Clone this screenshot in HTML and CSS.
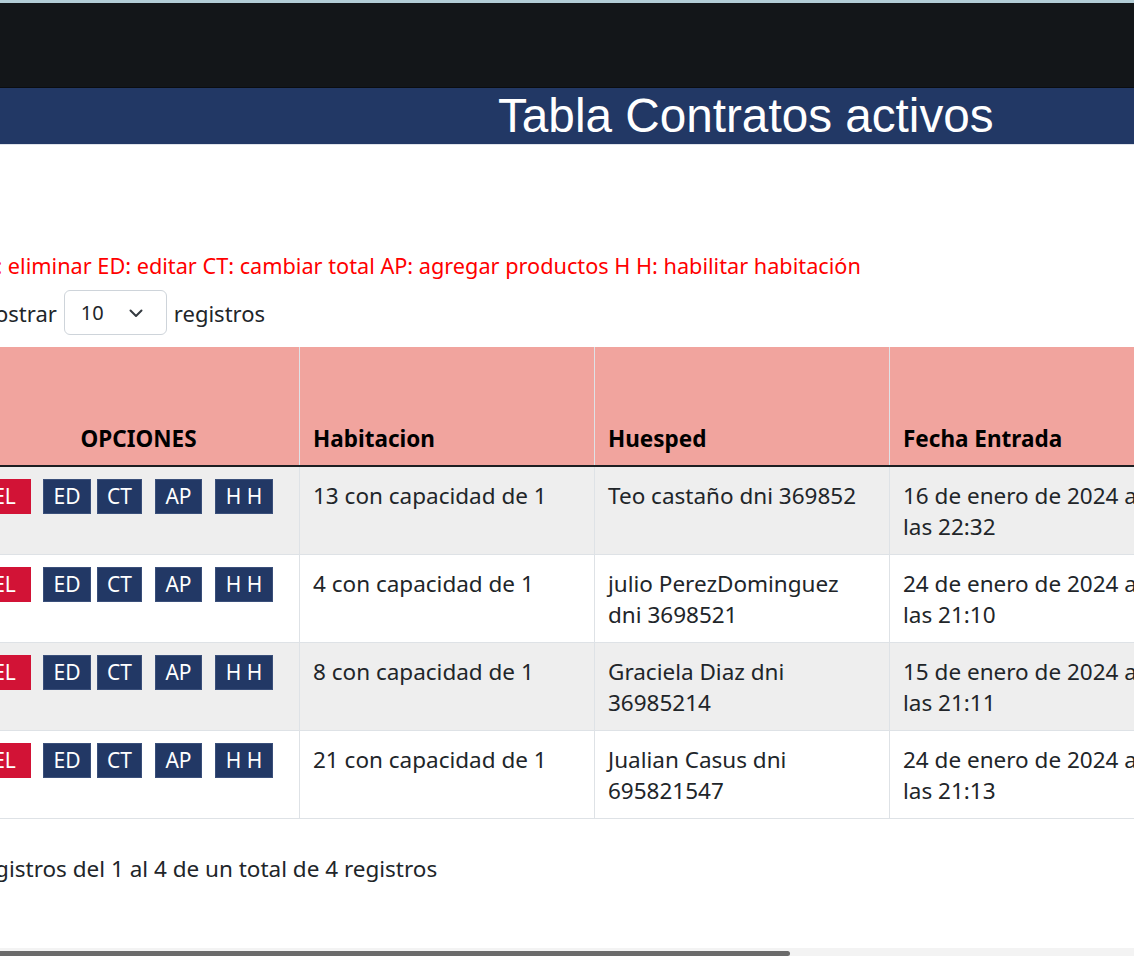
FILE: index.html
```html
<!DOCTYPE html>
<html lang="es">
<head>
<meta charset="utf-8">
<title>Tabla Contratos activos</title>
<link rel="stylesheet" href="styles.css">
</head>
<body>
<div class="topline"></div>
<nav class="navbar"></nav>
<header class="titlebar"><h1 class="title">Tabla Contratos activos</h1></header>
<main class="page">
  <div class="shift">
    <p class="legend">EL: eliminar ED: editar CT: cambiar total AP: agregar productos H H: habilitar habitación</p>
    <div class="length">
      <span class="mostrar">Mostrar</span>
      <div class="select"><span>10</span>
        <svg class="chev" width="16" height="16" viewBox="0 0 16 16"><path d="M2.5 5.5 8 11l5.5-5.5" fill="none" stroke="#343a40" stroke-width="2" stroke-linecap="round" stroke-linejoin="round"/></svg>
      </div>
      <span>registros</span>
    </div>
    <table class="tbl">
      <colgroup><col class="c1"><col class="c2"><col class="c2"><col class="c2"><col class="c2"></colgroup>
      <thead>
        <tr><th class="center">OPCIONES</th><th>Habitacion</th><th>Huesped</th><th>Fecha Entrada</th><th>Fecha Salida</th></tr>
      </thead>
      <tbody>
        <tr class="odd">
          <td class="opts"><span class="btn red">EL</span><span class="btn blue b-ed">ED</span><span class="btn blue b-ct">CT</span><span class="btn blue b-ap">AP</span><span class="btn blue b-hh">H H</span></td>
          <td>13 con capacidad de 1</td><td>Teo castaño dni 369852</td><td>16 de enero de 2024 a las 22:32</td><td></td>
        </tr>
        <tr>
          <td class="opts"><span class="btn red">EL</span><span class="btn blue b-ed">ED</span><span class="btn blue b-ct">CT</span><span class="btn blue b-ap">AP</span><span class="btn blue b-hh">H H</span></td>
          <td>4 con capacidad de 1</td><td>julio PerezDominguez dni 3698521</td><td>24 de enero de 2024 a las 21:10</td><td></td>
        </tr>
        <tr class="odd">
          <td class="opts"><span class="btn red">EL</span><span class="btn blue b-ed">ED</span><span class="btn blue b-ct">CT</span><span class="btn blue b-ap">AP</span><span class="btn blue b-hh">H H</span></td>
          <td>8 con capacidad de 1</td><td>Graciela Diaz dni 36985214</td><td>15 de enero de 2024 a las 21:11</td><td></td>
        </tr>
        <tr>
          <td class="opts"><span class="btn red">EL</span><span class="btn blue b-ed">ED</span><span class="btn blue b-ct">CT</span><span class="btn blue b-ap">AP</span><span class="btn blue b-hh">H H</span></td>
          <td>21 con capacidad de 1</td><td>Jualian Casus dni 695821547</td><td>24 de enero de 2024 a las 21:13</td><td></td>
        </tr>
      </tbody>
    </table>
    <p class="info">Mostrando registros del 1 al 4 de un total de 4 registros</p>
  </div>
</main>
<div class="scrollbar"><div class="thumb"></div></div>
</body>
</html>
```

FILE: styles.css
```css
html, body {
  margin: 0;
  padding: 0;
  background: #ffffff;
  overflow: hidden;
}
body {
  width: 1134px;
  height: 956px;
  font-family: "Noto Sans", "Open Sans", sans-serif;
  font-size: 22.5px;
  color: #212529;
  display: flex;
  flex-direction: column;
}
.topline {
  height: 3px;
  background: #b3cdd6;
}
.navbar {
  height: 84px;
  background: #131619;
  border-bottom: 1px solid #0b0d10;
}
.titlebar {
  height: 56px;
  background: #223865;
  border-bottom: 1px solid #dfe3ea;
}
.title {
  margin: 0;
  padding-left: 498px;
  font-family: "Liberation Sans", Arial, sans-serif;
  font-weight: 400;
  font-size: 47.7px;
  line-height: 55px;
  color: #ffffff;
  white-space: nowrap;
}
.page {
  flex: 1;
  overflow: hidden;
}
.shift {
  margin-left: -23px;
}
.legend {
  margin: 106px 0 0 -4px;
  color: #ff0000;
  font-size: 21.7px;
  line-height: 30px;
  white-space: nowrap;
}
.length {
  display: flex;
  align-items: center;
  gap: 7px;
  margin: 9px 0 0 -2px;
  height: 45px;
  font-size: 22px;
}
.select {
  flex: none;
  width: 103px;
  height: 45px;
  box-sizing: border-box;
  border: 1px solid #ced4da;
  border-radius: 6px;
  display: flex;
  align-items: center;
  justify-content: space-between;
  padding: 0 22px 0 16px;
  font-size: 20px;
}
.chev {
  display: block;
}
.tbl {
  margin-top: 12px;
  border-collapse: collapse;
  table-layout: fixed;
  width: 1502px;
}
.c1 { width: 322px; }
.c2 { width: 295px; }
.tbl th {
  background: #f1a49e;
  height: 119px;
  box-sizing: border-box;
  vertical-align: bottom;
  text-align: left;
  font-weight: 700;
  font-size: 22.5px;
  line-height: 30px;
  padding: 0 13px 11px;
  border-left: 1px solid #dee2e6;
  border-right: 1px solid #dee2e6;
  border-bottom: 2px solid #1d1f22;
  color: #000000;
}
.tbl th.center { text-align: center; }
.tbl td {
  vertical-align: top;
  padding: 13px 13px 12px;
  line-height: 31px;
  height: 62px;
  border: 1px solid #dee2e6;
  color: #212529;
  background: #ffffff;
}
.tbl tr.odd td { background: #eeeeee; }
.tbl td.opts {
  padding: 12px 0 0 0;
  white-space: nowrap;
  line-height: 0;
}
.btn {
  display: inline-block;
  height: 35px;
  line-height: 35px;
  box-sizing: border-box;
  font-size: 21px;
  color: #ffffff;
  text-align: center;
  vertical-align: top;
}
.red {
  background: #d21336;
  width: 53px;
}
.blue {
  background: #223865;
  border: 1px solid #3a4f7a;
  line-height: 33px;
}
.b-ed { width: 48px; margin-left: 12px; }
.b-ct { width: 45px; margin-left: 6px; }
.b-ap { width: 47px; margin-left: 13px; }
.b-hh { width: 58px; margin-left: 13px; }
.info {
  margin: 35px 0 0 -125px;
  font-size: 22.5px;
  line-height: 30px;
  white-space: nowrap;
}
.scrollbar {
  height: 8px;
  background: #f3f3f3;
  position: relative;
  flex: none;
}
.thumb {
  position: absolute;
  left: 0;
  bottom: 0;
  width: 790px;
  height: 5px;
  background: #6b6b6b;
  border-radius: 0 3px 3px 0;
}
```
